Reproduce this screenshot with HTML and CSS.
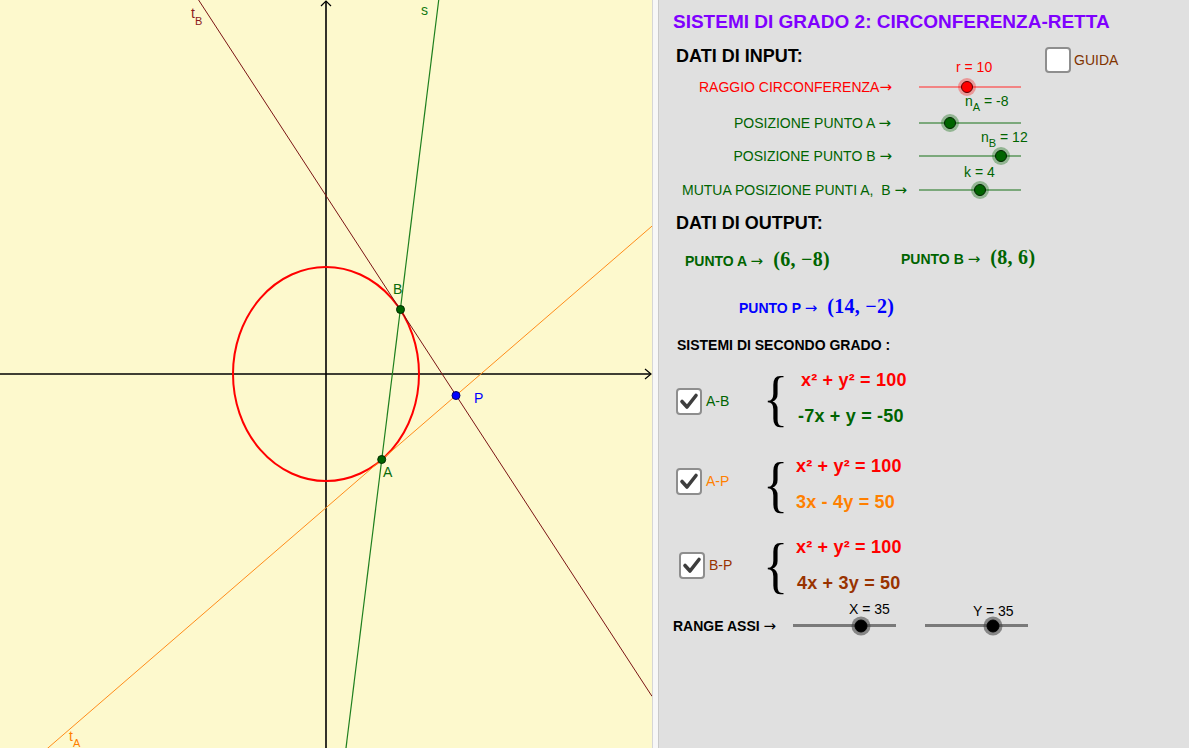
FILE: index.html
```html
<!DOCTYPE html>
<html lang="it">
<head>
<meta charset="utf-8">
<title>Sistemi di grado 2</title>
<link rel="stylesheet" href="styles.css">
</head>
<body>
<div class="app">
  <div class="graph">
    <svg class="plot" width="652" height="748" viewBox="0 0 652 748">
      <line x1="0" y1="374" x2="651" y2="374" stroke="#000" stroke-width="1.6"/>
      <polyline points="645,369 651,374 645,379" fill="none" stroke="#000" stroke-width="1.2"/>
      <line x1="326" y1="748" x2="326" y2="1" stroke="#000" stroke-width="1.6"/>
      <polyline points="321,6 326,1 331,6" fill="none" stroke="#000" stroke-width="1.2"/>
      <ellipse cx="326" cy="374" rx="93" ry="107" fill="none" stroke="#ff0000" stroke-width="2"/>
      <line x1="0" y1="789.4" x2="652" y2="226.1" stroke="#ff8c1a" stroke-width="1"/>
      <line x1="0" y1="-305" x2="652" y2="696.3" stroke="#7a1414" stroke-width="1"/>
      <line x1="438.7" y1="0" x2="346" y2="748" stroke="#1e7f1e" stroke-width="1.2"/>
      <circle cx="400.5" cy="309.5" r="4" fill="#006400" stroke="#002a00" stroke-width="1"/>
      <circle cx="381.7" cy="459.5" r="4" fill="#006400" stroke="#002a00" stroke-width="1"/>
      <circle cx="456" cy="395.5" r="4" fill="#0000ff" stroke="#00006a" stroke-width="1"/>
      <text class="lbl" x="191" y="18" fill="#8b1a1a">t<tspan class="sub" dy="7">B</tspan></text>
      <text class="lbl" x="421" y="15" fill="#127a12">s</text>
      <text class="lbl" x="393" y="294" fill="#0b6b0b">B</text>
      <text class="lbl" x="383" y="477" fill="#0b6b0b">A</text>
      <text class="lbl" x="474" y="403" fill="#0000ff">P</text>
      <text class="lbl" x="69" y="741" fill="#ff8000">t<tspan class="sub" dy="6">A</tspan></text>
    </svg>
  </div>
  <div class="divider"></div>
  <div class="panel">
    <h1 class="title">SISTEMI DI GRADO 2: CIRCONFERENZA-RETTA</h1>

    <div class="input-head">
      <h2 class="section">DATI DI INPUT:</h2>
      <div class="guida"><span class="cb"></span><span class="guida-text">GUIDA</span></div>
    </div>

    <div class="srow srow-r">
      <span class="slabel red">RAGGIO CIRCONFERENZA<span class="arr">→</span></span>
      <div class="track track-red">
        <span class="val val-r red">r = 10</span>
        <span class="knob knob-red" style="left:47%"></span>
      </div>
    </div>
    <div class="srow srow-a">
      <span class="slabel green">POSIZIONE PUNTO A <span class="arr">→</span></span>
      <div class="track track-green">
        <span class="val val-a green">n<sub>A</sub> = -8</span>
        <span class="knob knob-green" style="left:30%"></span>
      </div>
    </div>
    <div class="srow srow-b">
      <span class="slabel green">POSIZIONE PUNTO B <span class="arr">→</span></span>
      <div class="track track-green">
        <span class="val val-b green">n<sub>B</sub> = 12</span>
        <span class="knob knob-green" style="left:80%"></span>
      </div>
    </div>
    <div class="srow srow-k">
      <span class="slabel green">MUTUA POSIZIONE PUNTI A,&nbsp; B <span class="arr">→</span></span>
      <div class="track track-green">
        <span class="val val-k green">k = 4</span>
        <span class="knob knob-green" style="left:60%"></span>
      </div>
    </div>

    <h2 class="section section-out">DATI DI OUTPUT:</h2>

    <div class="out-row">
      <div class="pt green"><span class="pt-label">PUNTO A <span class="arr">→</span></span><span class="pt-val">(6, −8)</span></div>
      <div class="pt pt-up green"><span class="pt-label">PUNTO B <span class="arr">→</span></span><span class="pt-val">(8, 6)</span></div>
    </div>
    <div class="out-row out-row-p">
      <div class="pt blue"><span class="pt-label">PUNTO P <span class="arr">→</span></span><span class="pt-val">(14, −2)</span></div>
    </div>

    <div class="sys-title">SISTEMI DI SECONDO GRADO :</div>

    <div class="sys sys-ab">
      <div class="sys-check sys-check-ab"><span class="cb cb-on"><svg viewBox="0 0 26 26" width="26" height="26"><polyline points="6,13.5 11,19 20,7.5" fill="none" stroke="#3d3d3d" stroke-width="3.6" stroke-linecap="round" stroke-linejoin="round"/></svg></span><span class="sys-name green">A-B</span></div>
      <div class="brace">{</div>
      <div class="eqs">
        <div class="eq red eq-in5">x² + y² = 100</div>
        <div class="eq green eq-in2">-7x + y = -50</div>
      </div>
    </div>

    <div class="sys sys-ap">
      <div class="sys-check sys-check-ap"><span class="cb cb-on"><svg viewBox="0 0 26 26" width="26" height="26"><polyline points="6,13.5 11,19 20,7.5" fill="none" stroke="#3d3d3d" stroke-width="3.6" stroke-linecap="round" stroke-linejoin="round"/></svg></span><span class="sys-name orange">A-P</span></div>
      <div class="brace">{</div>
      <div class="eqs">
        <div class="eq red">x² + y² = 100</div>
        <div class="eq orange">3x - 4y = 50</div>
      </div>
    </div>

    <div class="sys sys-bp">
      <div class="sys-check sys-check-bp"><span class="cb cb-on"><svg viewBox="0 0 26 26" width="26" height="26"><polyline points="6,13.5 11,19 20,7.5" fill="none" stroke="#3d3d3d" stroke-width="3.6" stroke-linecap="round" stroke-linejoin="round"/></svg></span><span class="sys-name brown">B-P</span></div>
      <div class="brace">{</div>
      <div class="eqs">
        <div class="eq red">x² + y² = 100</div>
        <div class="eq brown eq-in1">4x + 3y = 50</div>
      </div>
    </div>

    <div class="range">
      <span class="range-label">RANGE ASSI <span class="arr">→</span></span>
      <div class="track track-gray">
        <span class="val val-x">X = 35</span>
        <span class="knob knob-black" style="left:66%"></span>
      </div>
      <div class="track track-gray track-y">
        <span class="val val-y">Y = 35</span>
        <span class="knob knob-black" style="left:66%"></span>
      </div>
    </div>
  </div>
</div>
</body>
</html>
```

FILE: styles.css
```css
html, body {
  margin: 0;
  padding: 0;
  background: #ffffff;
}

body {
  font-family: "Liberation Sans", Arial, sans-serif;
  color: #000;
}

.app {
  display: flex;
  width: 1189px;
  height: 748px;
  overflow: hidden;
}

.graph {
  flex: none;
  width: 652px;
  height: 748px;
  background: #fdf9cd;
}

.plot {
  display: block;
}

.lbl {
  font-family: "Liberation Sans", Arial, sans-serif;
  font-size: 14px;
}

.sub {
  font-size: 11px;
}

.divider {
  flex: none;
  width: 5px;
  background: #f7f7f7;
  border-left: 1px solid #d6d6d6;
  border-right: 1px solid #c9c9c9;
}

.panel {
  flex: 1;
  background: #e0e0e0;
  padding-top: 11px;
}

.red { color: #ff0000; }
.green { color: #006400; }
.blue { color: #0000ff; }
.orange { color: #ff8000; }
.brown { color: #993300; }

.arr {
  font-family: "DejaVu Sans", sans-serif;
  font-weight: normal;
  font-size: 15px;
}

.title {
  margin: 0;
  padding-left: 14px;
  font-size: 19px;
  line-height: 22px;
  font-weight: bold;
  color: #7f00ff;
  white-space: nowrap;
}

.input-head {
  display: grid;
  grid-template-columns: 369px auto;
  align-items: start;
  margin-top: 8px;
  padding-left: 17px;
  height: 34px;
}

.section {
  margin: 0;
  font-size: 18px;
  line-height: 30px;
  font-weight: bold;
  white-space: nowrap;
}

.guida {
  display: flex;
  align-items: center;
  gap: 3px;
  margin-top: 6px;
}

.cb {
  box-sizing: border-box;
  display: block;
  width: 26px;
  height: 26px;
  border: 2px solid #8e8e8e;
  border-radius: 4px;
  background: #ffffff;
}

.guida-text {
  font-size: 14px;
  line-height: 26px;
  color: #7f3300;
}

/* slider rows */
.srow {
  display: grid;
  grid-template-columns: 260px 102px;
  align-items: center;
  height: 16px;
}

.srow-r { margin-top: 4px; }
.srow-a { margin-top: 20px; }
.srow-b { margin-top: 17px; }
.srow-k { margin-top: 18px; }

.slabel {
  text-align: right;
  font-size: 14px;
  line-height: 16px;
  white-space: nowrap;
}

.srow-r .slabel { padding-right: 27px; }
.srow-a .slabel { padding-right: 28px; }
.srow-b .slabel { padding-right: 27px; }
.srow-k .slabel { padding-right: 12px; }

.track {
  position: relative;
  height: 16px;
}

.track::before {
  content: "";
  position: absolute;
  left: 0;
  right: 0;
  top: 7px;
  height: 2px;
}

.track-red::before { background: #f28484; }
.track-green::before { background: #7ba87b; }
.track-gray::before { background: #7a7a7a; top: 6px; height: 3px; }

.knob {
  position: absolute;
  top: 50%;
  box-sizing: border-box;
  width: 12px;
  height: 12px;
  border-radius: 50%;
  transform: translate(-50%, -50%);
  border: 1px solid #000;
}

.knob-red {
  background: #ff0000;
  border-color: #5a0000;
  box-shadow: 0 0 0 3px rgba(255, 0, 0, 0.32);
}

.knob-green {
  background: #006400;
  border-color: #002400;
  box-shadow: 0 0 0 3px rgba(0, 100, 0, 0.35);
}

.knob-black {
  width: 13px;
  height: 13px;
  background: #000;
  box-shadow: 0 0 0 3px rgba(60, 60, 60, 0.55);
}

.val {
  position: absolute;
  font-size: 14px;
  line-height: 16px;
  white-space: nowrap;
}

.val sub {
  font-size: 11px;
  line-height: 0;
  vertical-align: -5px;
}

.val-r { left: 37px; top: -20px; }
.val-a { left: 46px; top: -22px; }
.val-b { left: 62px; top: -19px; }
.val-k { left: 45px; top: -18px; }
.val-x { left: 56px; top: -17px; }
.val-y { left: 48px; top: -15px; }

.section-out {
  margin-top: 14px;
  padding-left: 17px;
  line-height: 22px;
}

/* output points */
.out-row {
  display: grid;
  grid-template-columns: 216px auto;
  align-items: center;
  margin-top: 14px;
  padding-left: 26px;
  height: 22px;
}

.out-row-p {
  margin-top: 25px;
  padding-left: 80px;
}

.pt {
  display: flex;
  align-items: baseline;
  white-space: nowrap;
}

.pt-up {
  position: relative;
  top: -2px;
}

.pt-label {
  font-size: 14px;
  font-weight: bold;
}

.pt-val {
  margin-left: 10px;
  font-family: "Liberation Serif", "Times New Roman", serif;
  font-weight: bold;
  font-size: 20px;
  letter-spacing: 0.3px;
}

.sys-title {
  margin-top: 19px;
  padding-left: 18px;
  font-size: 14px;
  line-height: 18px;
  font-weight: bold;
  white-space: nowrap;
}

/* systems */
.sys {
  display: grid;
  grid-template-columns: 109px 28px auto;
  align-items: center;
  height: 72px;
}

.sys-ab { margin-top: 8px; }
.sys-ap { margin-top: 14px; }
.sys-bp { margin-top: 9px; }

.sys-check {
  display: flex;
  align-items: center;
  gap: 4px;
  padding-left: 17px;
}

.sys-check-ab { padding-top: 6px; }
.sys-check-ap { padding-bottom: 6px; }
.sys-check-bp { padding-left: 20px; }

.cb-on {
  width: 26px;
  height: 27px;
  position: relative;
}

.cb-on svg {
  position: absolute;
  left: -2px;
  top: -2px;
}

.sys-name {
  font-size: 14px;
  line-height: 16px;
}

.brace {
  font-family: "Liberation Serif", "Times New Roman", serif;
  font-size: 62px;
  line-height: 72px;
  height: 72px;
  color: #000;
  margin-left: -5px;
  transform: scaleX(0.85);
  transform-origin: left center;
}

.eqs {
  display: flex;
  flex-direction: column;
}

.eq {
  font-size: 18px;
  line-height: 36px;
  font-weight: bold;
  white-space: nowrap;
  letter-spacing: 0.2px;
}

.eq-in5 { padding-left: 5px; }
.eq-in2 { padding-left: 2px; }
.eq-in1 { padding-left: 1px; }

/* range row */
.range {
  display: grid;
  grid-template-columns: 120px 103px 132px;
  align-items: center;
  height: 16px;
  margin-top: 17px;
  padding-left: 14px;
}

.range-label {
  font-size: 14px;
  line-height: 16px;
  font-weight: bold;
  white-space: nowrap;
}

.track-y {
  margin-left: 29px;
}
```
